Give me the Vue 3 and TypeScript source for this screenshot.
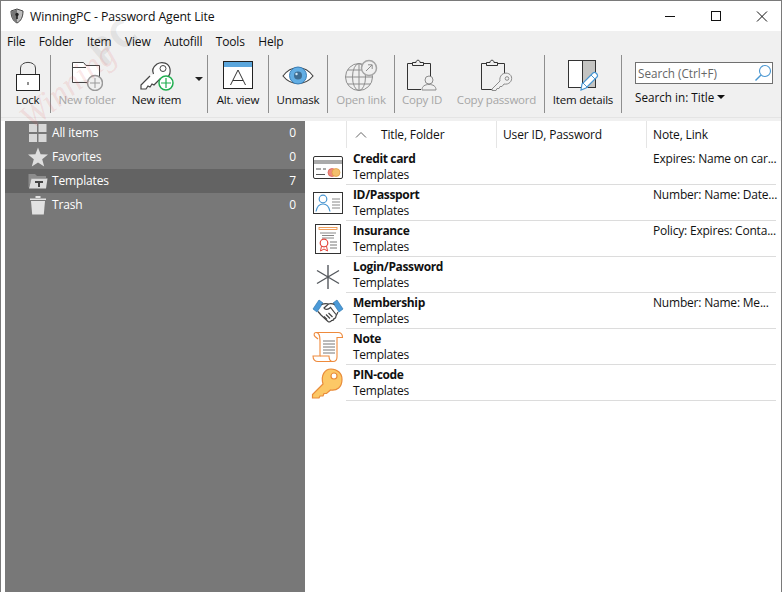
<script setup lang="ts">
interface Tool {
  id: string
  label: string
  width: number
  disabled?: boolean
  sep?: boolean
}

const menus = ['File', 'Folder', 'Item', 'View', 'Autofill', 'Tools', 'Help']

const tools: Tool[] = [
  { id: 'lock', label: 'Lock', width: 45, sep: true },
  { id: 'folder', label: 'New folder', width: 72 },
  { id: 'key', label: 'New item', width: 67 },
  { id: 'arrow', label: '', width: 17, sep: true },
  { id: 'alt', label: 'Alt. view', width: 60, sep: true },
  { id: 'eye', label: 'Unmask', width: 58, sep: true },
  { id: 'globe', label: 'Open link', width: 66, disabled: true, sep: true },
  { id: 'copyid', label: 'Copy ID', width: 54, disabled: true },
  { id: 'copypw', label: 'Copy password', width: 95, disabled: true, sep: true },
  { id: 'details', label: 'Item details', width: 76, sep: true },
]

const folders = [
  { id: 'all', label: 'All items', count: 0 },
  { id: 'fav', label: 'Favorites', count: 0 },
  { id: 'tpl', label: 'Templates', count: 7, active: true },
  { id: 'trash', label: 'Trash', count: 0 },
]

// notes are already shortened in the source grid
const rows = [
  { id: 'card', title: 'Credit card', note: 'Expires: Name on car...' },
  { id: 'passport', title: 'ID/Passport', note: 'Number: Name: Date...' },
  { id: 'insurance', title: 'Insurance', note: 'Policy: Expires: Conta...' },
  { id: 'login', title: 'Login/Password', note: '' },
  { id: 'member', title: 'Membership', note: 'Number: Name: Me...' },
  { id: 'note', title: 'Note', note: '' },
  { id: 'pin', title: 'PIN-code', note: '' },
]
</script>

<template>
  <div class="window">
    <header class="titlebar">
      <svg class="app-icon" width="16" height="16" viewBox="0 0 16 16">
        <path d="M8 1 L14 3 C14 9 12 13 8 15 C4 13 2 9 2 3 Z" fill="#bdbdbd" stroke="#444" />
        <path d="M8 1.500 V14.500 C4.500 13 2.600 9 2.600 3.400 Z" fill="#777" />
        <circle cx="8" cy="6.500" r="1.700" fill="#222" />
        <rect x="7.200" y="7" width="1.600" height="4" fill="#222" />
      </svg>
      <span class="title">WinningPC - Password Agent Lite</span>
      <div class="win-btns">
        <svg width="46" height="30" viewBox="0 0 46 30"><path d="M18 15.500 H28" stroke="#111" /></svg>
        <svg width="46" height="30" viewBox="0 0 46 30"><rect x="18.500" y="10.500" width="9" height="9" fill="none" stroke="#111" /></svg>
        <svg width="46" height="30" viewBox="0 0 46 30"><path d="M18 10.500 L28 20.500 M28 10.500 L18 20.500" stroke="#111" /></svg>
      </div>
    </header>

    <nav class="menubar">
      <span v-for="m in menus" :key="m" class="menu-item">{{ m }}</span>
    </nav>

    <div class="toolbar">
      <template v-for="t in tools" :key="t.id">
        <div class="tool" :class="{ disabled: t.disabled }" :style="{ width: t.width + 'px' }">
          <div class="tool-icon">
            <svg v-if="t.id === 'lock'" width="32" height="32" viewBox="0 0 32 32">
              <path d="M8.500 15 V9 C8.500 1.500 23.500 1.500 23.500 9 V15" fill="none" stroke="#444" stroke-width="1" />
              <rect x="4.500" y="15.500" width="23" height="16" fill="#fff" stroke="#222" />
              <rect x="15.500" y="23" width="1" height="3" fill="#222" />
            </svg>
            <svg v-else-if="t.id === 'folder'" width="32" height="32" viewBox="0 0 32 32">
              <path d="M1.500 23.500 V3.500 H12.500 L15 6.500 H28.500 V18 M1.500 8.500 H15 M1.500 23.500 H16" fill="#fff" stroke="#444" />
              <circle cx="24" cy="24" r="7.500" fill="#f0f0f0" stroke="#999" stroke-width="1.500" />
              <path d="M24 19 V29 M19 24 H29" stroke="#999" />
            </svg>
            <svg v-else-if="t.id === 'key'" width="36" height="32" viewBox="0 0 36 32">
              <path d="M11 18 L2 27 V31 H7 L9 28 L11 29 L13 26 L15 27 L21 21 C28 22 32 17 31 11 C30 5 23 3 18 6 C14 9 13 13 14.500 16" transform="translate(0 -1)" fill="#fff" stroke="#444" stroke-width="1.200" />
              <circle cx="24" cy="9.500" r="3" fill="none" stroke="#444" />
              <circle cx="27" cy="24" r="7" fill="#fff" stroke="#1fae4f" stroke-width="1.500" />
              <path d="M27 19 V29 M22 24 H32" stroke="#1fae4f" stroke-width="1.200" />
            </svg>
            <svg v-else-if="t.id === 'alt'" width="32" height="32" viewBox="0 0 32 32">
              <rect x="1.500" y="2.500" width="29" height="27" fill="#fff" stroke="#222" />
              <rect x="2" y="3" width="28" height="5" fill="#5ba6dc" />
              <path d="M8.500 26 L16 11 L23.500 26 M11 21.500 H21" fill="none" stroke="#333" />
            </svg>
            <svg v-else-if="t.id === 'eye'" width="34" height="32" viewBox="0 0 34 32">
              <path d="M2 17 C10 6 24 6 32 17 C24 27 10 27 2 17 Z" fill="#fff" stroke="#444" stroke-width="1.200" />
              <circle cx="17" cy="16.500" r="8.500" fill="#62aee4" stroke="#3a7fb8" />
              <circle cx="17" cy="16.500" r="4" fill="#3e6d92" />
              <circle cx="15.500" cy="15" r="1.200" fill="#cfe6f6" />
            </svg>
            <svg v-else-if="t.id === 'globe'" width="36" height="32" viewBox="0 0 36 32" fill="none" stroke="#8e8e8e">
              <circle cx="16" cy="18" r="13.500" />
              <ellipse cx="16" cy="18" rx="6.500" ry="13.500" />
              <path d="M16 4.500 V31.500 M2.500 18 H29.500 M4.500 11 H27.500 M4.500 25 H27.500" />
              <circle cx="26" cy="9" r="7.500" fill="#f0f0f0" stroke="#a5a5a5" stroke-width="1.500" />
              <path d="M23 12 L29 6 M25 5.800 H29.200 V10" />
            </svg>
            <svg v-else-if="t.id === 'copyid'" width="34" height="32" viewBox="0 0 34 32" fill="none">
              <path d="M7 4.500 H2.500 V30.500 H16 M18 4.500 H25.500 V17" stroke="#333" />
              <path d="M7.500 6.500 V3.500 H11 C11 .5 15 .5 15 3.500 H18.500 V6.500 Z" stroke="#333" fill="#f0f0f0" />
              <circle cx="24" cy="21" r="4" stroke="#8c8c8c" fill="#f0f0f0" />
              <path d="M17 31 C17 27 20 25.500 24 25.500 C28 25.500 31 27 31 31 Z" stroke="#8c8c8c" fill="#f0f0f0" />
            </svg>
            <svg v-else-if="t.id === 'copypw'" width="36" height="32" viewBox="0 0 36 32" fill="none">
              <path d="M7 4.500 H2.500 V30.500 H14 M18 4.500 H25.500 V15" stroke="#333" />
              <path d="M7.500 6.500 V3.500 H11 C11 .5 15 .5 15 3.500 H18.500 V6.500 Z" stroke="#333" fill="#f0f0f0" />
              <path d="M21 22 L13 30 V31.500 H17 L18 29.500 H20 L21 27.500 H23 L25 25 C30 26 33.500 22 32.500 18 C31.500 14 26 13 23 15.500 C21 17.500 20.500 20 21 22 Z" fill="#f0f0f0" stroke="#8c8c8c" />
              <circle cx="28" cy="19.500" r="1.800" stroke="#8c8c8c" />
            </svg>
            <svg v-else-if="t.id === 'details'" width="32" height="32" viewBox="0 0 32 32">
              <rect x="1.500" y="1.500" width="27" height="27" fill="#fff" stroke="#333" />
              <rect x="16" y="2" width="12" height="26" fill="#c4c4c2" />
              <path d="M15.500 1.500 V28.500" stroke="#333" />
              <path d="M14 31 L15 25 L26 14 C28 12 32 16 30 18 L19 29 Z" fill="#fff" stroke="#4a97d2" stroke-width="1.200" />
              <path d="M16 24 L21 29 M24 16 L28 20" stroke="#4a97d2" />
            </svg>
            <span v-else-if="t.id === 'arrow'" class="drop-arrow"></span>
          </div>
          <span class="tool-label" :class="{ muted: t.id === 'folder' }">{{ t.label }}</span>
        </div>
        <div v-if="t.sep" class="tool-sep"></div>
      </template>

      <div class="search-area">
        <div class="search-box">
          <span>Search (Ctrl+F)</span>
          <svg width="18" height="18" viewBox="0 0 18 18" fill="none" stroke="#4a97d2">
            <circle cx="11" cy="7" r="5.500" stroke-width="1.100" />
            <path d="M7 11 L1.500 16.500" stroke-width="1.400" />
          </svg>
        </div>
        <div class="search-in">Search in: Title <i class="caret"></i></div>
      </div>
    </div>

    <main class="body">
      <aside class="sidebar">
        <div v-for="f in folders" :key="f.id" class="folder" :class="{ active: f.active }">
          <svg class="folder-icon" width="20" height="20" viewBox="0 0 20 20">
            <g v-if="f.id === 'all'" fill="#d8d8d8">
              <rect x="1" y="1" width="8" height="8" />
              <rect x="10.500" y="1" width="8" height="8" />
              <rect x="1" y="11" width="8" height="8" />
              <rect x="10.500" y="11" width="8" height="8" />
            </g>
            <path v-else-if="f.id === 'fav'" d="M10 .5 L12.600 7.300 L20 7.600 L14.200 12.200 L16.200 19.500 L10 15.400 L3.800 19.500 L5.800 12.200 L0 7.600 L7.400 7.300 Z" fill="#dedede" />
            <g v-else-if="f.id === 'tpl'">
              <path d="M.5 17 V3 H7 L9 5 H18 V7 H4 Z" fill="#8d8d8d" />
              <path d="M1 17.500 L3.500 7.500 H19.500 L18 17.500 Z" fill="#dcdcdc" />
              <path d="M7 10 H15 V12 H12 V16 H10 V12 H7 Z" fill="#444" />
            </g>
            <g v-else fill="#e2e2e2">
              <rect x="2" y="3.500" width="16" height="1.500" />
              <rect x="7.500" y="1" width="5" height="2" />
              <path d="M3 6 H17 L15.800 19.500 H4.200 Z" />
            </g>
          </svg>
          <span class="folder-name">{{ f.label }}</span>
          <span class="folder-count">{{ f.count }}</span>
        </div>
      </aside>

      <section class="list">
        <div class="list-head">
          <div class="head-gap"></div>
          <div class="col col-title">
            <svg width="12" height="8" viewBox="0 0 12 8"><path d="M1 6.500 L6 1.500 L11 6.500" fill="none" stroke="#666" /></svg>
            <span>Title, Folder</span>
          </div>
          <div class="col col-user">User ID, Password</div>
          <div class="col col-note">Note, Link</div>
        </div>

        <div v-for="r in rows" :key="r.id" class="row">
          <div class="row-icon">
            <svg v-if="r.id === 'card'" width="32" height="32" viewBox="0 0 32 32">
              <rect x="2.500" y="5.500" width="29" height="22" rx="1.500" fill="#fff" stroke="#333" />
              <rect x="3" y="9" width="28" height="4" fill="#aaa" />
              <path d="M5 18 H10 M12 18 H15 M5 23.500 H14" stroke="#555" />
              <circle cx="21" cy="21.500" r="4" fill="#ee8a80" stroke="#d8574a" stroke-width=".7" />
              <circle cx="25" cy="21.500" r="4" fill="#f3bf6c" stroke="#e09a3c" stroke-width=".7" />
            </svg>
            <svg v-else-if="r.id === 'passport'" width="32" height="32" viewBox="0 0 32 32">
              <rect x="2.500" y="5.500" width="29" height="21" fill="#fff" stroke="#333" />
              <circle cx="12" cy="12" r="3.800" fill="none" stroke="#4a97d2" stroke-width="1.200" />
              <path d="M5 24.500 C6 19 9 17 12 17 C15 17 18 19 19 24.500" fill="none" stroke="#4a97d2" stroke-width="1.200" />
              <path d="M21 12 H29 M21 15 H29 M21 18 H29 M21 21 H29" stroke="#888" />
            </svg>
            <svg v-else-if="r.id === 'insurance'" width="32" height="32" viewBox="0 0 32 32">
              <rect x="4.500" y="1.500" width="25" height="29" fill="#fff" stroke="#333" />
              <rect x="8" y="4.500" width="18" height="2" fill="#fff" stroke="#ec8b3a" stroke-width=".8" />
              <path d="M9 10 H25 M11 12.500 H23 M11 15 H23" stroke="#888" />
              <circle cx="13" cy="20" r="3.800" fill="#fff" stroke="#e3463c" stroke-width="1.200" />
              <path d="M10.500 23 L9.500 28 L13 26 L16.500 28 L15.500 23" fill="none" stroke="#e3463c" />
              <path d="M19 19 H26 M19 22 H26 M19 25 H26" stroke="#777" />
            </svg>
            <svg v-else-if="r.id === 'login'" width="32" height="32" viewBox="0 0 32 32">
              <path d="M17 6 V30 M6 11.500 L28 24.500 M6 24.500 L28 11.500" stroke="#55595e" stroke-width="1.400" />
            </svg>
            <svg v-else-if="r.id === 'member'" width="34" height="32" viewBox="0 0 34 32">
              <path d="M2 14 L8 5 L12 8 L6 17 Z M32 14 L26 5 L22 8 L28 17 Z" fill="#4b9ad8" stroke="#2f78b0" stroke-width=".7" />
              <path d="M10.500 9.500 C13 8.500 15 8 17.500 9 C20 8 21.500 8.500 23.500 9.500 M7 16.500 L10 20 L17 26.500 C18.500 27.500 20 26.500 20.500 25.500 C22 25.500 23 24.500 23 23.500 C24.500 23.500 25 22 25 21 L27 17" fill="none" stroke="#444" stroke-width="1.200" />
              <path d="M17.500 9 L13 13 C14 15 17 15 19.500 12.500 L25 19.500 M13 21.500 L16 24.500 M15 19.500 L19 23.500 M17.500 18 L21.500 22" fill="none" stroke="#444" stroke-width="1.200" />
            </svg>
            <svg v-else-if="r.id === 'note'" width="33" height="32" viewBox="0 0 33 32">
              <path d="M5 1.500 H27 C30 1.500 31.500 3.500 31.500 6.500 H26 V26 C26 29 24.500 30.500 22 30.500 H7 C4 30.500 2 28.500 2 25 H9 V10 C9 5 8.500 1.500 5 1.500 C3 1.500 2.500 4 4 5.500 L7 8" fill="#fff" stroke="#ee8a3c" stroke-width="1.100" />
              <path d="M22 30.500 C19.500 30.500 18 28.500 18 25 H9" fill="none" stroke="#ee8a3c" stroke-width="1.100" />
              <path d="M12 10 H24 M12 13 H24 M12 16 H24 M12 19 H24 M12 22 H24" stroke="#777" />
            </svg>
            <svg v-else width="32" height="32" viewBox="0 0 32 32">
              <path d="M12 17 L1.500 27.500 V31 H8 L9 29 H12 L13 26.500 H15.500 L19.500 23 C26 24 31 20 31 12.500 C31 6 26 2 20 2 C14 2 9.500 8 12 17 Z" fill="#fcc866" stroke="#e98c3a" stroke-width="1.200" />
              <circle cx="23" cy="9" r="3" fill="#fff" stroke="#e98c3a" stroke-width="1.200" />
            </svg>
          </div>
          <div class="row-cell">
            <div class="col-title-text"><b>{{ r.title }}</b><span>Templates</span></div>
            <div class="col-user-text"></div>
            <div class="col-note-text">{{ r.note }}</div>
          </div>
        </div>
      </section>
    </main>

    <div class="watermark">
      <span class="wm-pc">PC</span>
      <span class="wm-win">Winning</span>
    </div>
  </div>
</template>

<style>
html, body { margin: 0; background: #f0f0f0; }
</style>

<style scoped>
.window {
  position: relative;
  box-sizing: border-box;
  width: 782px;
  height: 592px;
  border: 1px solid #7a7a7a;
  border-bottom: 0;
  display: flex;
  flex-direction: column;
  overflow: hidden;
  background: #f0f0f0;
  font-family: "Open Sans", "Noto Sans", sans-serif;
  font-size: 12px;
  color: #111;
}

.titlebar {
  height: 30px;
  flex: none;
  background: #fff;
  display: flex;
  align-items: center;
  padding-left: 8px;
}
.app-icon { margin-right: 5px; }
.title { font-size: 12.300px; letter-spacing: -0.120px; }
.win-btns { margin-left: auto; display: flex; margin-right: -4px; }

.menubar {
  height: 20px;
  flex: none;
  display: flex;
  align-items: center;
  padding-left: 6px;
  gap: 13.400px;
}
.menu-item { font-size: 12px; letter-spacing: -0.150px; }

.toolbar {
  height: 67px;
  flex: none;
  display: flex;
  align-items: flex-start;
  padding: 4px 0 0 4px;
  border-bottom: 1px solid #e4e4e4;
  box-sizing: border-box;
}
.tool {
  flex: none;
  height: 58px;
  display: flex;
  flex-direction: column;
  align-items: center;
  justify-content: space-between;
}
.tool-icon {
  height: 36px;
  display: flex;
  align-items: center;
  justify-content: center;
  padding-top: 2px;
  box-sizing: content-box;
}
.tool-label {
  font-size: 11.500px;
  letter-spacing: -0.200px;
  white-space: nowrap;
  line-height: 16px;
  padding-bottom: 5px;
}
.tool-label.muted, .tool.disabled .tool-label { color: #a6a6a6; }
.tool-sep {
  flex: none;
  width: 1px;
  height: 58px;
  background: #8e8e8e;
}
.drop-arrow {
  width: 0;
  height: 0;
  border: 4px solid transparent;
  border-top: 4px solid #222;
  border-bottom: 0;
  margin-top: 8px;
}

.search-area { margin-left: 13px; width: 138px; padding-top: 7px; }
.search-box {
  box-sizing: border-box;
  height: 22px;
  background: #fff;
  border: 1px solid #707070;
  display: flex;
  align-items: center;
  justify-content: space-between;
  padding: 0 0 0 2px;
  color: #666;
  font-size: 11.700px;
}
.search-in {
  margin-top: 5px;
  font-size: 11.700px;
  display: flex;
  align-items: center;
  gap: 3px;
}
.caret {
  width: 0;
  height: 0;
  border: 4px solid transparent;
  border-top: 4px solid #111;
  border-bottom: 0;
}

.body {
  flex: 1;
  min-height: 0;
  display: flex;
  background: #fff;
  border-top: 3px solid #f0f0f0;
}
.sidebar {
  width: 300px;
  flex: none;
  margin-left: 4px;
  background: #787878;
  color: #fff;
}
.folder {
  box-sizing: border-box;
  height: 24px;
  display: flex;
  align-items: center;
  padding: 0 9px 1px 23px;
}
.folder.active { background: #636363; }
.folder-icon { margin-right: 4px; margin-top: 1px; }
.folder-name { font-size: 12px; letter-spacing: -0.150px; }
.folder-count { margin-left: auto; }

.list { flex: 1; min-width: 0; padding-right: 5px; }
.list-head {
  height: 27px;
  display: flex;
  align-items: stretch;
  margin-bottom: 1px;
  margin-right: -5px;
}
.head-gap { width: 41px; flex: none; border-right: 1px solid #e5e5e5; }
.col {
  box-sizing: border-box;
  display: flex;
  align-items: center;
  padding: 0 0 0 6px;
  font-size: 12px;
  letter-spacing: -0.150px;
  border-right: 1px solid #e5e5e5;
}
.col-title { width: 150px; gap: 14px; padding-left: 8px; }
.col-user { width: 150px; }
.col-note { flex: 1; border-right: 0; padding-left: 6px; }

.row { height: 36px; display: flex; }
.row-icon {
  width: 41px;
  flex: none;
  display: flex;
  align-items: center;
  padding-left: 6px;
  box-sizing: border-box;
}
.row-cell {
  flex: 1;
  min-width: 0;
  display: flex;
  border-bottom: 1px solid #dcdcdc;
  box-sizing: border-box;
}
.col-title-text {
  width: 150px;
  flex: none;
  box-sizing: border-box;
  padding-left: 7px;
  display: flex;
  flex-direction: column;
  line-height: 16px;
  padding-top: 2px;
}
.col-title-text b { font-weight: 700; letter-spacing: -0.350px; }
.col-title-text span { letter-spacing: -0.250px; }
.col-user-text { width: 150px; flex: none; }
.col-note-text {
  flex: 1;
  min-width: 0;
  padding: 2px 0 0 7px;
  line-height: 16px;
  letter-spacing: -0.200px;
  white-space: nowrap;
}

.watermark {
  position: absolute;
  left: 0;
  top: 0;
  width: 160px;
  height: 170px;
  pointer-events: none;
}
.wm-pc {
  position: absolute;
  left: 87px;
  top: 14px;
  font-size: 38px;
  font-weight: 700;
  color: rgba(120, 120, 120, 0.14);
  transform: rotate(-40deg);
}
.wm-win {
  position: absolute;
  left: 10px;
  top: 66px;
  font-family: "Liberation Serif", serif;
  font-style: italic;
  font-size: 34px;
  color: rgba(225, 90, 90, 0.15);
  transform: rotate(-40deg);
}
</style>
